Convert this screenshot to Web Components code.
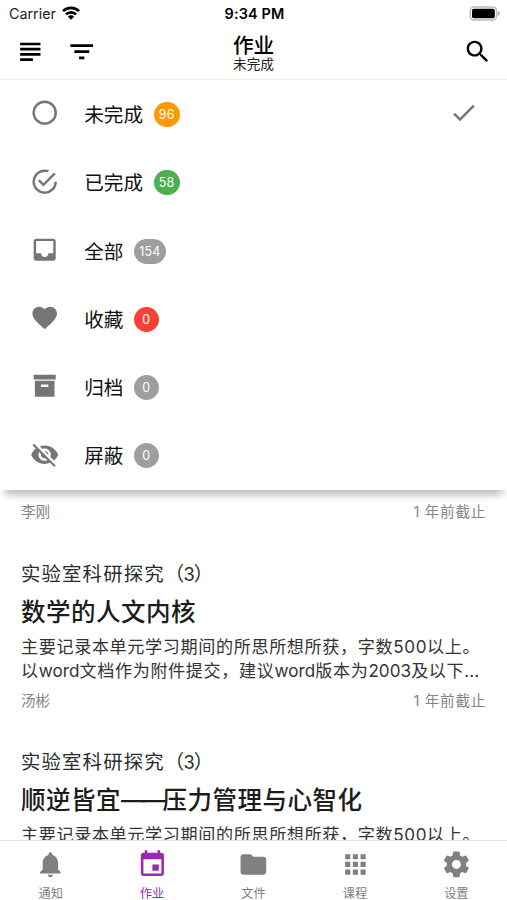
<!DOCTYPE html>
<html lang="zh-CN">
<head>
<meta charset="utf-8">
<title>作业</title>
<style>
html,body{margin:0;height:100%;background:#fff;overflow:hidden}
body{font-family:Inter,"Noto Sans CJK SC",sans-serif;color:#111}
</style>
</head>
<body>
<homework-app></homework-app>
<script>
const define = (name, html, setup) => {
  const tpl = document.createElement('template');
  tpl.innerHTML = html;
  customElements.define(name, class extends HTMLElement {
    constructor() {
      super();
      this.attachShadow({mode: 'open'}).append(tpl.content.cloneNode(true));
    }
    connectedCallback() { if (setup) setup(this, this.shadowRoot); }
  });
};

const ICONS = {
  circle: 'M12,20A8,8 0 0,1 4,12A8,8 0 0,1 12,4A8,8 0 0,1 20,12A8,8 0 0,1 12,20M12,2A10,10 0 0,0 2,12A10,10 0 0,0 12,22A10,10 0 0,0 22,12A10,10 0 0,0 12,2Z',
  done: 'M20,12A8,8 0 0,1 12,20A8,8 0 0,1 4,12A8,8 0 0,1 12,4C12.76,4 13.5,4.11 14.2,4.31L15.77,2.74C14.61,2.26 13.34,2 12,2A10,10 0 0,0 2,12A10,10 0 0,0 12,22A10,10 0 0,0 22,12M7.91,10.08L6.5,11.5L11,16L21,6L19.59,4.58L11,13.17L7.91,10.08Z',
  inbox: 'M19 3H4.99C3.88 3 3.01 3.89 3.01 5L3 19c0 1.1.88 2 1.99 2H19c1.1 0 2-.9 2-2V5c0-1.11-.9-2-2-2zm0 12h-4c0 1.66-1.35 3-3 3s-3-1.34-3-3H4.99V5H19v10z',
  heart: 'M12,21.35L10.55,20.03C5.4,15.36 2,12.27 2,8.5C2,5.41 4.42,3 7.5,3C9.24,3 10.91,3.81 12,5.08C13.09,3.81 14.76,3 16.5,3C19.58,3 22,5.41 22,8.5C22,12.27 18.6,15.36 13.45,20.03L12,21.35Z',
  archive: 'M3,3H21V7H3V3M4,8H20V21H4V8M9.5,11A0.5,0.5 0 0,0 9,11.5V13H15V11.5A0.5,0.5 0 0,0 14.5,11H9.5Z',
  hidden: 'M12 7c2.76 0 5 2.24 5 5 0 .65-.13 1.26-.36 1.83l2.92 2.92c1.51-1.26 2.7-2.89 3.43-4.75-1.73-4.39-6-7.5-11-7.5-1.4 0-2.74.25-3.98.7l2.16 2.16C10.74 7.13 11.35 7 12 7zM2 4.27l2.28 2.28.46.46C3.08 8.3 1.78 10.02 1 12c1.73 4.39 6 7.5 11 7.5 1.55 0 3.03-.3 4.38-.84l.42.42L19.73 22 21 20.73 3.27 3 2 4.27zM7.53 9.8l1.55 1.55c-.05.21-.08.43-.08.65 0 1.66 1.34 3 3 3 .22 0 .44-.03.65-.08l1.55 1.55c-.67.33-1.41.53-2.2.53-2.76 0-5-2.24-5-5 0-.79.2-1.53.53-2.2zm4.31-.78l3.15 3.15.02-.16c0-1.66-1.34-3-3-3l-.17.01z',
  check: 'M9 16.17L4.83 12l-1.42 1.41L9 19 21 7l-1.41-1.41z',
  search: 'M15.5 14h-.79l-.28-.27C15.41 12.59 16 11.11 16 9.5 16 5.91 13.09 3 9.5 3S3 5.91 3 9.5 5.91 16 9.5 16c1.61 0 3.09-.59 4.23-1.57l.27.28v.79l5 4.99L20.49 19l-4.99-5zm-6 0C7.01 14 5 11.99 5 9.5S7.01 5 9.5 5 14 7.01 14 9.5 11.99 14 9.5 14z',
  lines: 'M4.2 4.6h16.6v2.2H4.2zM4.2 8.85h16.6v2.2H4.2zM4.2 13.1h16.6v2.2H4.2zM4.2 17.35h10.4v2.2H4.2z',
  filter: 'M2.7 5.9h18.6v2.2H2.7zM6 10.9h12.2v2.2H6zM9.9 15.9h4.3v2.2H9.9z',
  bell: 'M12 22c1.1 0 2-.9 2-2h-4c0 1.1.89 2 2 2zm6-6v-5c0-3.07-1.64-5.64-4.5-6.32V4c0-.83-.67-1.5-1.5-1.5s-1.5.67-1.5 1.5v.68C7.63 5.36 6 7.92 6 11v5l-2 2v1h16v-1l-2-2z',
  event: 'M17 12h-5v5h5v-5zM16 1v2H8V1H6v2H5c-1.11 0-1.99.9-1.99 2L3 19c0 1.1.89 2 2 2h14c1.1 0 2-.9 2-2V5c0-1.1-.9-2-2-2h-1V1h-2zm3 18H5V8h14v11z',
  folder: 'M10 4H4c-1.1 0-1.99.9-1.99 2L2 18c0 1.1.9 2 2 2h16c1.1 0 2-.9 2-2V8c0-1.1-.9-2-2-2h-8l-2-2z',
  apps: 'M4 8h4V4H4v4zm6 12h4v-4h-4v4zm-6 0h4v-4H4v4zm0-6h4v-4H4v4zm6 0h4v-4h-4v4zm6-10v4h4V4h-4zm-6 4h4V4h-4v4zm6 6h4v-4h-4v4zm0 6h4v-4h-4v4z',
  gear: 'M12,15.5A3.5,3.5 0 0,1 8.5,12A3.5,3.5 0 0,1 12,8.5A3.5,3.5 0 0,1 15.5,12A3.5,3.5 0 0,1 12,15.5M19.43,12.97C19.47,12.65 19.5,12.33 19.5,12C19.5,11.67 19.47,11.34 19.43,11L21.54,9.37C21.73,9.22 21.78,8.95 21.66,8.73L19.66,5.27C19.54,5.05 19.27,4.96 19.05,5.05L16.56,6.05C16.04,5.66 15.5,5.32 14.87,5.07L14.5,2.42C14.46,2.18 14.25,2 14,2H10C9.75,2 9.54,2.18 9.5,2.42L9.13,5.07C8.5,5.32 7.96,5.66 7.44,6.05L4.95,5.05C4.73,4.96 4.46,5.05 4.34,5.27L2.34,8.73C2.21,8.95 2.27,9.22 2.46,9.37L4.57,11C4.53,11.34 4.5,11.67 4.5,12C4.5,12.33 4.53,12.65 4.57,12.97L2.46,14.63C2.27,14.78 2.21,15.05 2.34,15.27L4.34,18.73C4.46,18.95 4.73,19.03 4.95,18.95L7.44,17.94C7.96,18.34 8.5,18.68 9.13,18.93L9.5,21.58C9.54,21.82 9.75,22 10,22H14C14.25,22 14.46,21.82 14.5,21.58L14.87,18.93C15.5,18.67 16.04,18.34 16.56,17.94L19.05,18.95C19.27,19.03 19.54,18.95 19.66,18.73L21.66,15.27C21.78,15.05 21.73,14.78 21.54,14.63L19.43,12.97Z'
};

define('app-icon', `<style>
:host{display:block;width:var(--size,29.4px);height:var(--size,29.4px);flex:none}
svg{display:block;width:100%;height:100%;fill:currentColor}</style>
<svg viewBox="0 0 24 24"><path/></svg>`,
(el, root) => root.querySelector('path').setAttribute('d', ICONS[el.getAttribute('name')]));

define('status-bar', `<style>
:host{display:grid;grid-template-columns:1fr auto 1fr;align-items:center;height:27px;padding:0 7px 0 9px;color:#000;font-size:14.3px;line-height:27px}
.left{display:flex;align-items:center;gap:6px;color:#222}
.time{font-weight:600;font-size:14.4px;letter-spacing:.15px}
.wifi{width:18px;height:14px;margin-top:-2px}
.battery{justify-self:end;width:31px;height:15px}
</style>
<div class="left"><span>Carrier</span>
<svg class="wifi" viewBox="0 0 18 14"><g fill="none" stroke="#000" stroke-width="2.7"><path d="M1 5.1a11.3 11.3 0 0 1 16 0"/><path d="M3.9 8.4a7.2 7.2 0 0 1 10.2 0"/></g><path d="M9 13.7 5.8 10.5a4.5 4.5 0 0 1 6.4 0z"/></svg></div>
<span class="time">9:34 PM</span>
<svg class="battery" viewBox="0 0 31 15"><rect x="1.3" y=".9" width="26.2" height="13" rx="3.6" fill="#fff" stroke="#bbb" stroke-width="1.5"/><rect x="3" y="2.7" width="22.8" height="9.5" rx="1.7"/><path d="M28.8 5v5c1.2-.5 2-1.3 2-2.5s-.8-2-2-2.5z" fill="#aaa"/></svg>`);

define('nav-bar', `<style>
:host{display:grid;grid-template-columns:1fr auto 1fr;height:51px;border-bottom:1px solid #efefef;color:#000;padding:1px 15px 0}
.side{display:flex;gap:22.4px;align-items:center;padding-bottom:3px}
.right{justify-content:flex-end}
.titles{text-align:center;padding-top:6.5px}
h1{font-size:20.6px;line-height:22px;font-weight:500;margin:0}
p{font-size:13.6px;line-height:15px;margin:0;color:#222}
</style>
<div class="side"><slot name="left"></slot></div>
<div class="titles"><h1><slot></slot></h1><p><slot name="sub"></slot></p></div>
<div class="side right"><slot name="right"></slot></div>`);

define('filter-menu', `<style>
:host{display:block;height:409.5px;position:relative;z-index:1;flex:none}
:host::after{content:"";position:absolute;z-index:-1;left:6px;right:6px;bottom:0;height:8px;box-shadow:0 3px 8px 1px rgba(0,0,0,.32)}
.rows{display:grid;grid-template-rows:repeat(6,1fr);height:100%;background:#fff}
</style><div class="rows"><slot></slot></div>`);

define('filter-row', `<style>
:host{display:flex;align-items:center;padding:0 29px 0 29.8px;color:#111}
app-icon{color:#757575;margin-bottom:2px}
.label{font-size:19.6px;line-height:28px;margin-left:25.1px;margin-top:2px}
.badge{font-size:12.4px;line-height:25px;min-width:14.4px;padding:0 5.2px;border-radius:13px;background:var(--badge,#9e9e9e);color:#fff;text-align:center;margin-left:10.5px;margin-top:1px;letter-spacing:.2px}
.check{margin-left:auto}
</style><span class="label"><slot></slot></span><span class="badge"></span>`,
(el, root) => {
  const lead = document.createElement('app-icon');
  lead.setAttribute('name', el.getAttribute('icon'));
  root.querySelector('.label').before(lead);
  root.querySelector('.badge').textContent = el.getAttribute('count');
  if (el.hasAttribute('selected')) {
    const check = document.createElement('app-icon');
    check.className = 'check';
    check.setAttribute('name', 'check');
    root.append(check);
  }
});

define('homework-card', `<style>
:host{display:block;height:188.3px;padding:0 21px;flex:none;box-sizing:border-box}
.course{font-size:19.4px;letter-spacing:1.15px;line-height:28px;color:#2c2c2c;white-space:nowrap}
h2{font-size:24.5px;letter-spacing:.5px;font-weight:500;line-height:34px;margin:7px 0 0;color:#1c1c1c;white-space:nowrap}
.body{font-size:17.1px;letter-spacing:.63px;line-height:24.5px;margin-top:6px;color:#333;white-space:nowrap}
.foot{display:flex;justify-content:space-between;font-size:14.6px;line-height:20px;color:#858585;margin-top:7.3px}
.due{letter-spacing:.7px}
</style>
<div class="course"><slot name="course"></slot></div><h2><slot name="title"></slot></h2>
<div class="body"><slot></slot></div>
<div class="foot"><span><slot name="author"></slot></span><span class="due"><slot name="due"></slot></span></div>`);

define('tab-item', `<style>
:host{display:flex;flex-direction:column;align-items:center;color:#808080;flex:1;--size:30.8px;padding-top:8px}
:host([active]){color:#9c27b0}
span{font-size:12.2px;line-height:12px;margin-top:8.6px}
</style><slot name="icon"></slot><span><slot></slot></span>`);

define('tab-bar', `<style>
:host{display:flex;height:60px;border-top:1px solid #e4e4e4;background:#fff;flex:none;box-sizing:border-box}
</style><slot></slot>`);

define('homework-app', `<style>
:host{display:flex;flex-direction:column;height:900px;width:507px;background:#fff;overflow:hidden}
main{flex:1;min-height:0;overflow:hidden;display:flex;flex-direction:column}
.last{display:flex;justify-content:space-between;font-size:14.6px;line-height:20px;color:#858585;padding:12.5px 21px 0;height:70px;box-sizing:border-box;flex:none}
.last span:last-child{letter-spacing:.7px}
.latin{letter-spacing:.05px}
.open{letter-spacing:-.6px}
.digit{font-size:18.2px;letter-spacing:-1.2px}
.dash{letter-spacing:-3.8px}
</style>
<status-bar></status-bar>
<nav-bar>作业<span slot="sub">未完成</span>
<app-icon slot="left" name="lines"></app-icon><app-icon slot="left" name="filter"></app-icon>
<app-icon slot="right" name="search"></app-icon></nav-bar>
<main>
<filter-menu>
<filter-row icon="circle" count="96" selected style="--badge:#ff9800">未完成</filter-row>
<filter-row icon="done" count="58" style="--badge:#4caf50">已完成</filter-row>
<filter-row icon="inbox" count="154">全部</filter-row>
<filter-row icon="heart" count="0" style="--badge:#f44336">收藏</filter-row>
<filter-row icon="archive" count="0">归档</filter-row>
<filter-row icon="hidden" count="0">屏蔽</filter-row>
</filter-menu>
<div class="last"><span>李刚</span><span>1 年前截止</span></div>
<homework-card><span slot="course">实验室科研探究<span class="open">（</span><span class="digit">3</span>）</span><span slot="title">数学的人文内核</span>主要记录本单元学习期间的所思所想所获，字数500以上。<br>以<span class="latin">word</span>文档作为附件提交，建议<span class="latin">word</span>版本为<span class="latin">2003</span>及以下<span class="latin">...</span><span slot="author">汤彬</span><span slot="due">1 年前截止</span></homework-card>
<homework-card><span slot="course">实验室科研探究<span class="open">（</span><span class="digit">3</span>）</span><span slot="title">顺逆皆宜<span class="dash">——</span>压力管理与心智化</span>主要记录本单元学习期间的所思所想所获，字数500以上。</homework-card>
</main>
<tab-bar>
<tab-item><app-icon slot="icon" name="bell"></app-icon>通知</tab-item>
<tab-item active><app-icon slot="icon" name="event"></app-icon>作业</tab-item>
<tab-item><app-icon slot="icon" name="folder"></app-icon>文件</tab-item>
<tab-item><app-icon slot="icon" name="apps"></app-icon>课程</tab-item>
<tab-item><app-icon slot="icon" name="gear"></app-icon>设置</tab-item>
</tab-bar>`);
</script>
</body>
</html>
